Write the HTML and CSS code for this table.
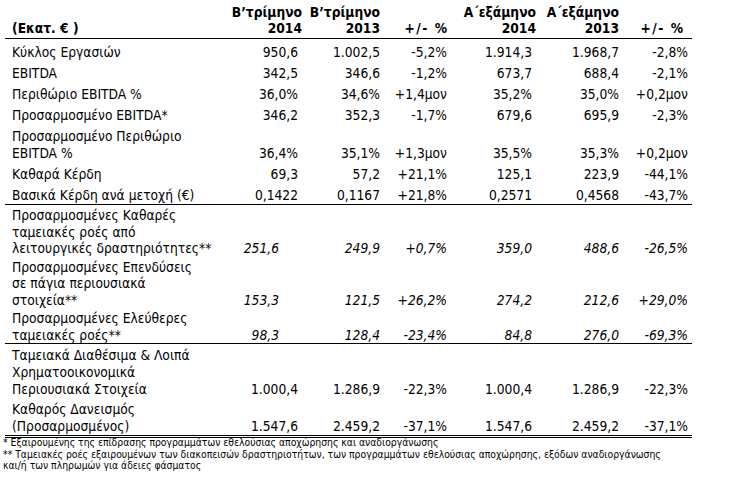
FILE: index.html
```html
<!DOCTYPE html>
<html lang="el">
<head>
<meta charset="utf-8">
<title>Αποτελέσματα</title>
<link rel="stylesheet" href="styles.css">
</head>
<body>
<table class="fin">
  <colgroup>
    <col class="c-label"><col class="c-q1"><col class="c-q2"><col class="c-qd"><col class="c-h1"><col class="c-h2"><col class="c-hd">
  </colgroup>
  <thead>
    <tr class="head">
      <th class="lab">(Εκατ. € )</th>
      <th class="h-tight">Β’τρίμηνο<br>2014</th>
      <th>Β’τρίμηνο<br>2013</th>
      <th class="h-pct">+/- %</th>
      <th class="h-tight">Α΄εξάμηνο<br>2014</th>
      <th>Α΄εξάμηνο<br>2013</th>
      <th class="h-pct h-wide">+/- %</th>
    </tr>
  </thead>
  <tbody class="sec-a">
    <tr><td class="lab">Κύκλος Εργασιών</td><td>950,6</td><td>1.002,5</td><td>-5,2%</td><td>1.914,3</td><td>1.968,7</td><td>-2,8%</td></tr>
    <tr><td class="lab">EBITDA</td><td>342,5</td><td>346,6</td><td>-1,2%</td><td>673,7</td><td>688,4</td><td>-2,1%</td></tr>
    <tr><td class="lab">Περιθώριο EBITDA %</td><td>36,0%</td><td>34,6%</td><td>+1,4μον</td><td>35,2%</td><td>35,0%</td><td>+0,2μον</td></tr>
    <tr><td class="lab">Προσαρμοσμένο EBITDA*</td><td>346,2</td><td>352,3</td><td>-1,7%</td><td>679,6</td><td>695,9</td><td>-2,3%</td></tr>
    <tr><td class="lab">Προσαρμοσμένο Περιθώριο<br>EBITDA %</td><td>36,4%</td><td>35,1%</td><td>+1,3μον</td><td>35,5%</td><td>35,3%</td><td>+0,2μον</td></tr>
    <tr><td class="lab">Καθαρά Κέρδη</td><td>69,3</td><td>57,2</td><td>+21,1%</td><td>125,1</td><td>223,9</td><td>-44,1%</td></tr>
    <tr class="end"><td class="lab">Βασικά Κέρδη ανά μετοχή (€)</td><td>0,1422</td><td>0,1167</td><td>+21,8%</td><td>0,2571</td><td>0,4568</td><td>-43,7%</td></tr>
  </tbody>
  <tbody class="sec-b">
    <tr><td class="lab">Προσαρμοσμένες Καθαρές<br>ταμειακές ροές από<br>λειτουργικές δραστηριότητες**</td><td class="first">251,6</td><td>249,9</td><td>+0,7%</td><td>359,0</td><td>488,6</td><td>-26,5%</td></tr>
    <tr><td class="lab">Προσαρμοσμένες Επενδύσεις<br>σε πάγια περιουσιακά<br>στοιχεία**</td><td class="first">153,3</td><td>121,5</td><td>+26,2%</td><td>274,2</td><td>212,6</td><td>+29,0%</td></tr>
    <tr class="end"><td class="lab">Προσαρμοσμένες Ελεύθερες<br>ταμειακές ροές**</td><td class="first">98,3</td><td>128,4</td><td>-23,4%</td><td>84,8</td><td>276,0</td><td>-69,3%</td></tr>
  </tbody>
  <tbody class="sec-c">
    <tr><td class="lab">Ταμειακά Διαθέσιμα &amp; Λοιπά<br>Χρηματοοικονομικά<br>Περιουσιακά Στοιχεία</td><td>1.000,4</td><td>1.286,9</td><td>-22,3%</td><td>1.000,4</td><td>1.286,9</td><td>-22,3%</td></tr>
    <tr class="end"><td class="lab">Καθαρός Δανεισμός<br>(Προσαρμοσμένος)</td><td>1.547,6</td><td>2.459,2</td><td>-37,1%</td><td>1.547,6</td><td>2.459,2</td><td>-37,1%</td></tr>
  </tbody>
</table>
<div class="notes">
  <p>* Εξαιρουμένης της επίδρασης προγραμμάτων εθελούσιας αποχώρησης και αναδιοργάνωσης</p>
  <p>** Ταμειακές ροές εξαιρουμένων των διακοπεισών δραστηριοτήτων, των προγραμμάτων εθελούσιας αποχώρησης, εξόδων αναδιοργάνωσης<br>και/ή των πληρωμών για άδειες φάσματος</p>
</div>
</body>
</html>
```

FILE: styles.css
```css
html, body {
  margin: 0;
  padding: 0;
  background: #fff;
}
body {
  font-family: "DejaVu Sans Condensed", "DejaVu Sans", sans-serif;
  font-stretch: condensed;
  color: #000;
  font-size: 13.7px;
}
.fin {
  margin-left: 5px;
  border-collapse: collapse;
  table-layout: fixed;
  width: 687px;
}
.c-label { width: 223px; }
.c-q1 { width: 74px; }
.c-q2 { width: 82px; }
.c-qd { width: 67px; }
.c-h1 { width: 85px; }
.c-h2 { width: 87px; }
.c-hd { width: 69px; }

.fin th, .fin td {
  padding: 0 4px 0 0;
  text-align: right;
  vertical-align: bottom;
  white-space: nowrap;
  font-weight: normal;
}
.fin .lab {
  text-align: left;
  padding-left: 7px;
}
.head th {
  font-weight: bold;
  line-height: 16px;
  padding-top: 4px;
  padding-bottom: 2px;
  border-bottom: 1px solid #000;
}
.head th.h-tight { padding-right: 0; }
.head th.h-pct { letter-spacing: 1.5px; padding-right: 2.5px; }
.head th.h-wide { padding-right: 7.5px; }
.sec-a td {
  line-height: 17px;
  padding-top: 4px;
}
.sec-a tr:first-child td { padding-top: 5px; }
.sec-b td {
  line-height: 16.5px;
  padding-top: 2px;
  font-style: italic;
}
.sec-b td.lab { font-style: normal; }
.sec-b td.first { padding-right: 23px; }
.sec-c td {
  line-height: 17px;
  padding-top: 3px;
}
.sec-a .end td, .sec-b .end td {
  border-bottom: 1px solid #000;
}
.sec-c .end td {
  border-bottom: 3px double #000;
}
.notes {
  margin: -1px 0 0 3px;
  font-size: 10.3px;
  line-height: 11.5px;
}
.notes p {
  margin: 0;
}
```
